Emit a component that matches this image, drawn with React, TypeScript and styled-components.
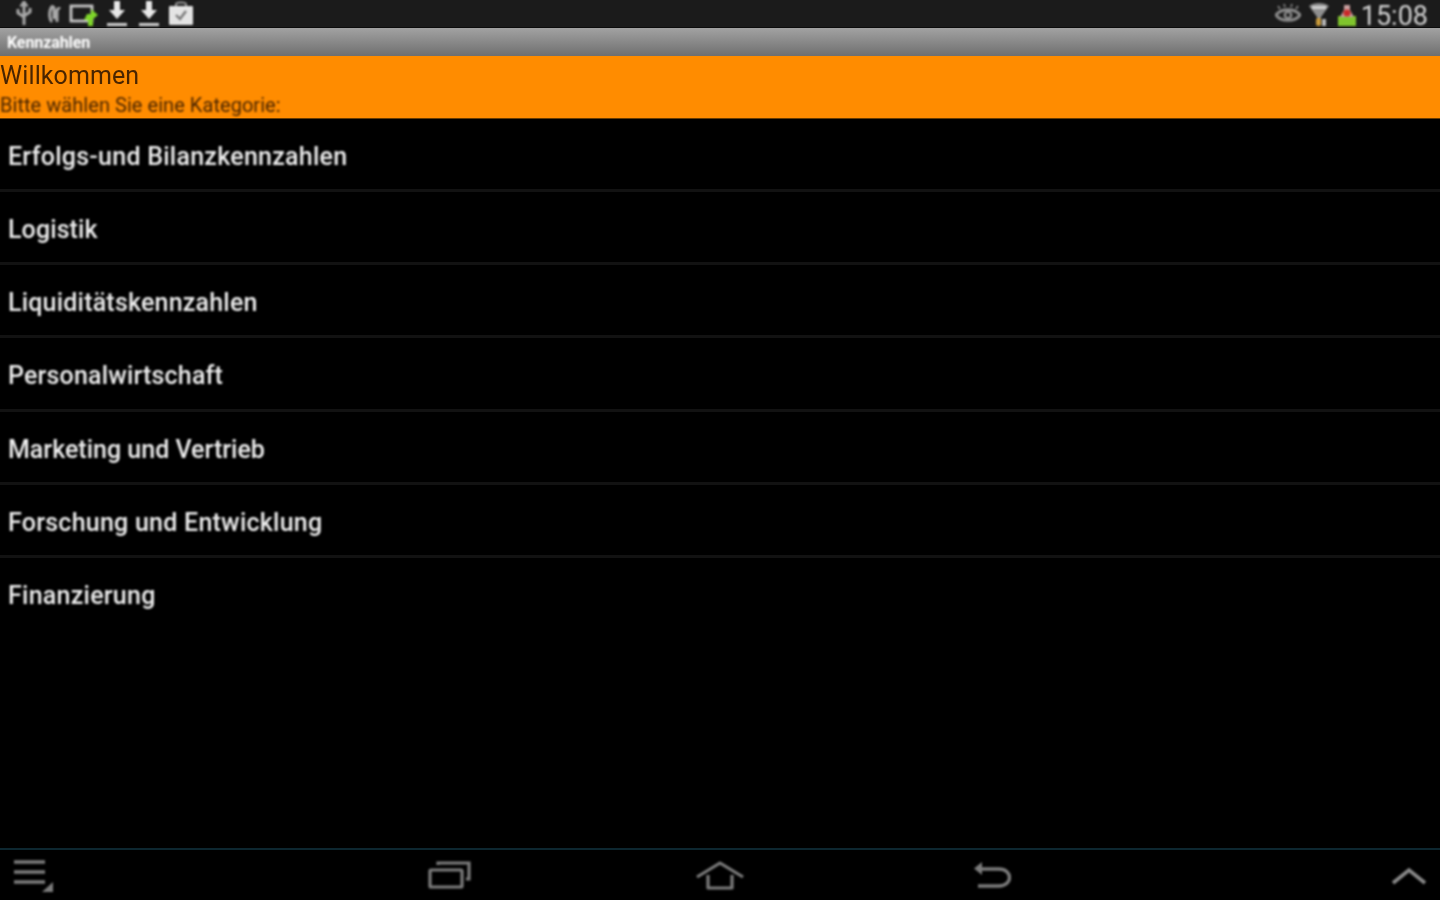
import React from 'react';
import styled, { createGlobalStyle } from 'styled-components';

const categories = [
  { name: 'Erfolgs-und Bilanzkennzahlen', tracking: 0.25 },
  { name: 'Logistik', tracking: 0.1 },
  { name: 'Liquiditätskennzahlen', tracking: 0.2 },
  { name: 'Personalwirtschaft', tracking: 0.17 },
  { name: 'Marketing und Vertrieb', tracking: 0 },
  { name: 'Forschung und Entwicklung', tracking: 0.24 },
  { name: 'Finanzierung', tracking: 0.25 },
];

const GlobalStyle = createGlobalStyle`
  html, body {
    margin: 0;
    padding: 0;
    background: #000;
  }
`;

const Screen = styled.div`
  width: 1440px;
  height: 900px;
  display: flex;
  flex-direction: column;
  overflow: hidden;
  background: #000;
  font-family: Roboto, "Liberation Sans", sans-serif;
`;

const StatusBar = styled.div`
  height: 28px;
  flex: none;
  display: flex;
  align-items: center;
  justify-content: space-between;
  background: #1b1b1b;
  border-bottom: 1px solid #0c0c0c;
  box-sizing: border-box;
`;

const IconGroup = styled.div`
  display: flex;
  align-items: center;
  filter: blur(0.8px);
`;

const LeftIcons = styled(IconGroup)`
  padding-left: 8px;
`;

const RightIcons = styled(IconGroup)`
  padding-right: 12px;
`;

const StatusSlot = styled.div<{ $width: number }>`
  width: ${({ $width }) => $width}px;
  display: flex;
  justify-content: center;
`;

const Clock = styled.span`
  font-size: 27px;
  line-height: 28px;
  color: #d4d4d4;
  margin-left: 1px;
  position: relative;
  top: 2px;
`;

const TitleBar = styled.div`
  height: 28px;
  flex: none;
  display: flex;
  align-items: center;
  padding-left: 7px;
  background: linear-gradient(#a2a2a2, #6f6f6f);
`;

const TitleText = styled.span`
  font-size: 16px;
  font-weight: 700;
  letter-spacing: -0.1px;
  color: #ffffff;
  filter: blur(0.8px);
`;

const Banner = styled.div`
  height: 63px;
  flex: none;
  box-sizing: border-box;
  background: #ff8c00;
  color: #4a2500;
  border-bottom: 1px solid #6a3c00;
  display: flex;
  flex-direction: column;
`;

const BannerTitle = styled.span`
  font-size: 25px;
  line-height: 30px;
  margin-top: 5px;
  letter-spacing: 0.1px;
  filter: blur(0.7px);
`;

const BannerHint = styled.span`
  font-size: 20px;
  line-height: 24px;
  margin-top: 2px;
  letter-spacing: 0.05px;
  color: #4a2500;
  filter: blur(0.8px);
`;

const List = styled.ul`
  list-style: none;
  margin: 0;
  padding: 0;
  flex: 1;
`;

const Row = styled.li`
  height: 73.2px;
  box-sizing: border-box;
  display: flex;
  align-items: center;
  padding: 5px 0 0 8px;
  border-bottom: 3px solid #121212;
  font-size: 25px;
  font-weight: 500;
  color: #eeeeee;

  &:first-child {
    height: 73px;
    padding-top: 4px;
  }

  &:last-child {
    border-bottom: 0;
    padding-top: 1px;
  }
`;

const RowLabel = styled.span<{ $tracking: number }>`
  letter-spacing: ${({ $tracking }) => $tracking}px;
  filter: blur(0.9px);
`;

const NavBar = styled.div`
  height: 52px;
  flex: none;
  box-sizing: border-box;
  display: flex;
  align-items: center;
  padding: 2px 0 0 12px;
  background: #000;
  border-top: 2px solid #0d2730;
`;

const NavButton = styled.div<{ $gap?: number }>`
  display: flex;
  margin-left: ${({ $gap }) => $gap ?? 0}px;
  filter: blur(0.8px);
`;

const UsbIcon = () => (
  <svg width="22" height="26" viewBox="0 0 22 26" fill="none" stroke="#a8a8a8" strokeWidth="3">
    <path d="M11 4V24M5 8V12L11 16M17 7V11L11 15" />
    <path d="M9 4H13L11 1Z" fill="#a8a8a8" />
  </svg>
);

const ClipIcon = () => (
  <svg width="18" height="26" viewBox="0 0 18 26" fill="none" stroke="#a8a8a8" strokeWidth="3">
    <path d="M7 21C4 18 4 11 6 7C7 5 9 5 9 8V18M12 21V10C12 8 14 7 15 8" />
  </svg>
);

const SyncIcon = () => (
  <svg width="30" height="26" viewBox="0 0 30 26" fill="none">
    <rect x="2" y="5" width="21" height="15" stroke="#c8c8c8" strokeWidth="2.8" />
    <path d="M18 13H22V8L29 14L24 18V25H19V19H15Z" fill="#7fd62a" />
  </svg>
);

const DownloadIcon = () => (
  <svg width="22" height="26" viewBox="0 0 22 26" fill="#e8e8e8">
    <path d="M8 0H14V9H19L11 18L3 9H8Z" />
    <rect x="1" y="22" width="20" height="3" fill="#d0d0d0" />
  </svg>
);

const TaskIcon = () => (
  <svg width="26" height="26" viewBox="0 0 26 26" fill="none">
    <path d="M8 6V3C8 1 18 1 18 3V6" stroke="#9a9a9a" strokeWidth="2" />
    <rect x="1" y="5" width="24" height="19" rx="1" fill="#e4e4e4" />
    <path d="M8 14L12 18L18 10" stroke="#777" strokeWidth="2.4" />
  </svg>
);

const EyeIcon = () => (
  <svg width="26" height="22" viewBox="0 0 26 22" fill="none" stroke="#8c8c8c">
    <path d="M1 12C6 5 20 5 25 12C20 19 6 19 1 12Z" strokeWidth="3" />
    <circle cx="13" cy="12" r="3.2" strokeWidth="2.4" />
    <path d="M5 6L3 3M10 4L9 1M16 4L17 1M21 6L23 3" strokeWidth="1.6" />
  </svg>
);

const WifiIcon = () => (
  <svg width="22" height="26" viewBox="0 0 22 26">
    <path d="M1 5C6 1 16 1 21 5L13 16V24H9V16Z" fill="#8f8f8f" />
    <path d="M4 5H18V8H4Z" fill="#d0d0d0" />
    <rect x="8" y="17" width="5" height="8" rx="2" fill="#c99a3a" />
    <rect x="14" y="18" width="4" height="7" fill="#b8b8b8" />
  </svg>
);

const AlertIcon = () => (
  <svg width="20" height="24" viewBox="0 0 20 24">
    <rect x="1" y="14" width="18" height="10" fill="#7fc42c" />
    <path d="M7 3H13V8L17 15H3L7 8Z" fill="#c9a0a0" />
    <circle cx="10" cy="11" r="3.6" fill="#c92a2a" />
  </svg>
);

const MenuIcon = () => (
  <svg width="42" height="36" viewBox="0 0 42 36" fill="none" stroke="#7c7c7c" strokeWidth="3.6">
    <path d="M2 4H33M2 14H33M2 24H33" />
    <path d="M30 34L41 34V24Z" fill="#7c7c7c" stroke="none" />
  </svg>
);

const RecentIcon = () => (
  <svg width="44" height="30" viewBox="0 0 44 30" fill="none" stroke="#7c7c7c" strokeWidth="3.2">
    <rect x="2" y="9" width="32" height="17" rx="1" />
    <path d="M10 4V2H41V18H38" />
  </svg>
);

const HomeIcon = () => (
  <svg width="50" height="30" viewBox="0 0 50 30" fill="none" stroke="#7c7c7c" strokeWidth="3.2" strokeLinejoin="round">
    <path d="M2 16L25 2L48 16" />
    <path d="M13 14V27H37V14" />
  </svg>
);

const BackIcon = () => (
  <svg width="38" height="30" viewBox="0 0 38 30" fill="none" stroke="#7c7c7c" strokeWidth="3.4">
    <path d="M6 8H26C40 8 40 25 26 25H5" />
    <path d="M9 1V14L1 7.5Z" fill="#7c7c7c" stroke="none" />
  </svg>
);

const ChevronIcon = () => (
  <svg width="36" height="20" viewBox="0 0 36 20" fill="none" stroke="#8a8a8a" strokeWidth="3.6">
    <path d="M2 17L18 4L34 17" />
  </svg>
);

const App: React.FC = () => {
  return (
    <Screen>
      <GlobalStyle />
      <StatusBar>
        <LeftIcons>
          <StatusSlot $width={32}><UsbIcon /></StatusSlot>
          <StatusSlot $width={27}><ClipIcon /></StatusSlot>
          <StatusSlot $width={34}><SyncIcon /></StatusSlot>
          <StatusSlot $width={32}><DownloadIcon /></StatusSlot>
          <StatusSlot $width={32}><DownloadIcon /></StatusSlot>
          <StatusSlot $width={32}><TaskIcon /></StatusSlot>
        </LeftIcons>
        <RightIcons>
          <StatusSlot $width={32}><EyeIcon /></StatusSlot>
          <StatusSlot $width={30}><WifiIcon /></StatusSlot>
          <StatusSlot $width={26}><AlertIcon /></StatusSlot>
          <Clock>15:08</Clock>
        </RightIcons>
      </StatusBar>
      <TitleBar>
        <TitleText>Kennzahlen</TitleText>
      </TitleBar>
      <Banner>
        <BannerTitle>Willkommen</BannerTitle>
        <BannerHint>Bitte wählen Sie eine Kategorie:</BannerHint>
      </Banner>
      <List>
        {categories.map(({ name, tracking }) => (
          <Row key={name}>
            <RowLabel $tracking={tracking}>{name}</RowLabel>
          </Row>
        ))}
      </List>
      <NavBar>
        <NavButton>
          <MenuIcon />
        </NavButton>
        <NavButton $gap={374}>
          <RecentIcon />
        </NavButton>
        <NavButton $gap={223}>
          <HomeIcon />
        </NavButton>
        <NavButton $gap={228}>
          <BackIcon />
        </NavButton>
        <NavButton $gap={380}>
          <ChevronIcon />
        </NavButton>
      </NavBar>
    </Screen>
  );
};

export default App;
